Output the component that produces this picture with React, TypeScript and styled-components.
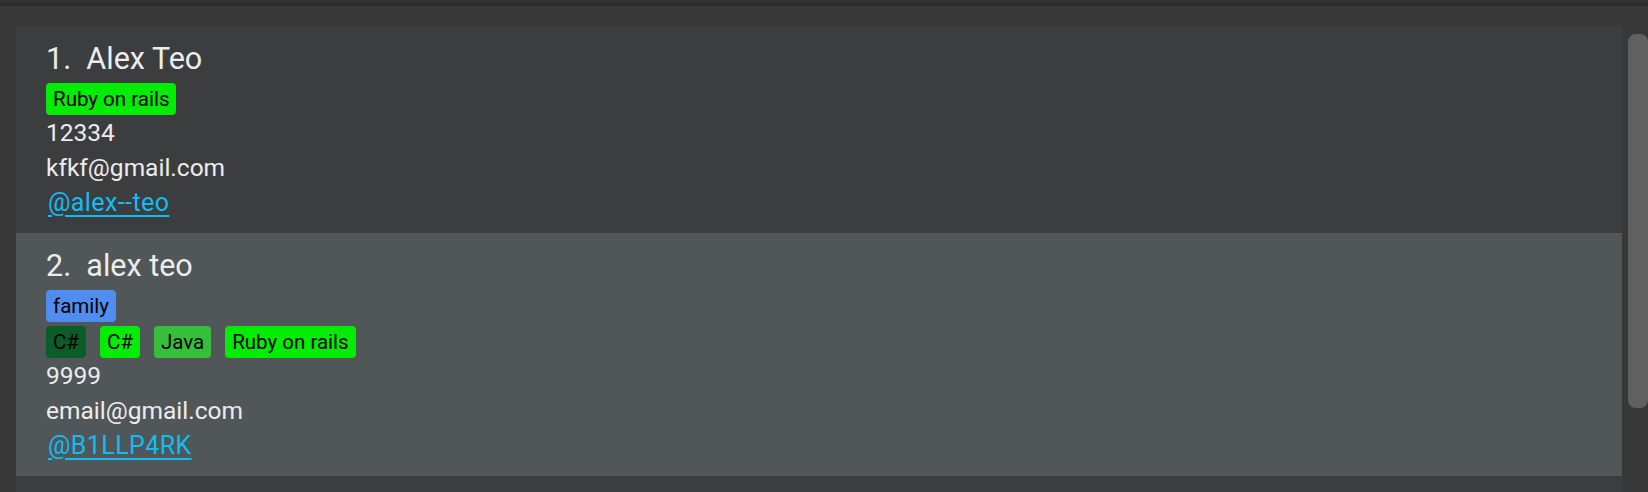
import React from "react";
import styled, { createGlobalStyle } from "styled-components";

const GlobalStyle = createGlobalStyle`
  html, body {
    margin: 0;
    padding: 0;
    background: #383838;
    overflow: hidden;
  }
  body {
    font-family: Roboto, "Liberation Sans", sans-serif;
  }
`;

const Window = styled.div`
  display: flex;
  flex-direction: column;
  width: 1648px;
  height: 492px;
  overflow: hidden;
  background: #383838;
`;

const TopBar = styled.div`
  flex: 0 0 auto;
  height: 4px;
  background: #2b2b2b;
  border-top: 2px solid #343434;
`;

const Body = styled.div`
  flex: 1;
  min-height: 0;
  display: flex;
`;

const ListPane = styled.div`
  flex: 1;
  min-width: 0;
  padding: 20px 0 0 16px;
  display: flex;
  flex-direction: column;
  overflow: hidden;
`;

const ScrollTrack = styled.div`
  flex: 0 0 26px;
  padding: 28px 0 0 6px;
  box-sizing: border-box;
`;

const Thumb = styled.div`
  width: 20px;
  height: 374px;
  background: #606060;
  border-radius: 8px;
`;

const Card = styled.div<{ $alt: boolean }>`
  flex: 0 0 auto;
  background: ${(p) => (p.$alt ? "#515658" : "#3c3d3f")};
  padding: 16px 0 13px 30px;
  color: #ececec;
`;

const EmptyCard = styled(Card)`
  min-height: 160px;
`;

const Name = styled.div`
  font-size: 30.5px;
  line-height: 34px;
  white-space: pre;
`;

const TagGroups = styled.div`
  display: flex;
  flex-direction: column;
  gap: 4px;
  margin-top: 7px;
`;

const TagRow = styled.div`
  display: flex;
  flex-wrap: wrap;
  gap: 4px 14px;
`;

const Tag = styled.span<{ $bg: string }>`
  background: ${(p) => p.$bg};
  color: #000;
  font-size: 20.5px;
  line-height: 32px;
  padding: 0 7px;
  border-radius: 4px;
`;

const Detail = styled.div`
  font-size: 24.5px;
  line-height: 35px;
`;

const Handle = styled.a`
  display: inline-block;
  margin-left: 2px;
  font-size: 25px;
  line-height: 35px;
  letter-spacing: 0.4px;
  color: #10bdf3;
  text-decoration: underline;
  text-decoration-thickness: 2px;
  text-underline-offset: 4px;
`;

type TagInfo = { label: string; bg: string };

type Person = {
  index: number;
  name: string;
  tagRows: TagInfo[][];
  phone: string;
  email: string;
  handle: string;
};

const BRIGHT = "#03ec03";
const DARK = "#0b5d27";
const MID = "#36bf3a";
const BLUE = "#4f8def";

const people: Person[] = [
  {
    index: 1,
    name: "Alex Teo",
    tagRows: [[{ label: "Ruby on rails", bg: BRIGHT }]],
    phone: "12334",
    email: "kfkf@gmail.com",
    handle: "@alex--teo",
  },
  {
    index: 2,
    name: "alex teo",
    tagRows: [
      [{ label: "family", bg: BLUE }],
      [
        { label: "C#", bg: DARK },
        { label: "C#", bg: BRIGHT },
        { label: "Java", bg: MID },
        { label: "Ruby on rails", bg: BRIGHT },
      ],
    ],
    phone: "9999",
    email: "email@gmail.com",
    handle: "@B1LLP4RK",
  },
];

function PersonCard({ person, alt }: { person: Person; alt: boolean }) {
  return (
    <Card $alt={alt}>
      <Name>{`${person.index}.  ${person.name}`}</Name>
      <TagGroups>
        {person.tagRows.map((row, i) => (
          <TagRow key={i}>
            {row.map((t, j) => (
              <Tag key={j} $bg={t.bg}>
                {t.label}
              </Tag>
            ))}
          </TagRow>
        ))}
      </TagGroups>
      <Detail>{person.phone}</Detail>
      <Detail>{person.email}</Detail>
      <div>
        <Handle href="#">{person.handle}</Handle>
      </div>
    </Card>
  );
}

export default function App() {
  return (
    <>
      <GlobalStyle />
      <Window>
        <TopBar />
        <Body>
          <ListPane>
            {people.map((p, i) => (
              <PersonCard key={p.index} person={p} alt={i % 2 === 1} />
            ))}
            <EmptyCard $alt={false} />
          </ListPane>
          <ScrollTrack>
            <Thumb />
          </ScrollTrack>
        </Body>
      </Window>
    </>
  );
}
